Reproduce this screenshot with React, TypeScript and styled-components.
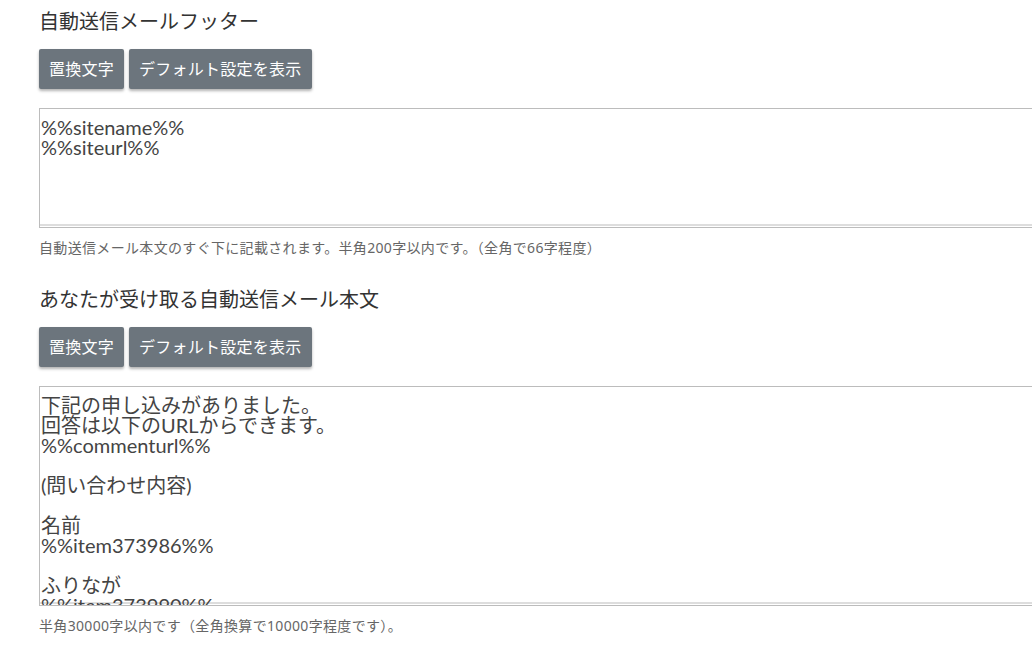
import React from "react";
import styled, { createGlobalStyle } from "styled-components";

const GlobalStyle = createGlobalStyle`
  html, body {
    margin: 0;
    padding: 0;
    background: #ffffff;
    overflow: hidden;
  }
  body {
    font-family: "Noto Sans", "Noto Sans CJK JP", sans-serif;
    color: #333333;
  }
`;

const Page = styled.div`
  padding: 10px 0 0 39px;
  display: flex;
  flex-direction: column;
`;

const Section = styled.section`
  display: flex;
  flex-direction: column;
  margin-bottom: 31px;
`;

const Title = styled.h3`
  margin: 0;
  font-size: 20px;
  font-weight: 400;
  line-height: 24px;
  color: #333333;
`;

const Toolbar = styled.div`
  display: flex;
  gap: 5px;
  margin-top: 15px;
`;

const Button = styled.button`
  height: 40px;
  padding: 0 10px;
  border: none;
  border-radius: 2px;
  background: #6c757d;
  color: #ffffff;
  font-family: "Noto Sans", "Noto Sans CJK JP", sans-serif;
  font-size: 16px;
  line-height: 40px;
  letter-spacing: 0.25px;
  box-shadow: 0 2px 3px rgba(0, 0, 0, 0.3);
  cursor: pointer;
`;

const Editor = styled.textarea<{ $height: number }>`
  display: block;
  margin-top: 19px;
  width: 1100px;
  height: ${(p) => p.$height}px;
  box-sizing: border-box;
  padding: 8px 1px 0 1px;
  border: 1px solid #bcbcbc;
  box-shadow: inset 0 -1px 0 #ffffff, inset 0 -3px 0 #dddddd;
  font-family: "Lato", "Noto Sans CJK JP", sans-serif;
  font-size: 20px;
  line-height: 20px;
  color: #444444;
  resize: none;
  overflow: hidden;
  outline: none;
  background: #ffffff;
`;

const Help = styled.p`
  margin: 11px 0 0;
  font-size: 14px;
  line-height: 18px;
  letter-spacing: 0.33px;
  color: #666666;
`;

const footerText = "%%sitename%%\n%%siteurl%%";
const bodyText =
  "下記の申し込みがありました。\n回答は以下のURLからできます。\n%%commenturl%%\n\n(問い合わせ内容)\n\n名前\n%%item373986%%\n\nふりなが\n%%item373990%%\n\nメールアドレス\n%%item373987%%";

export default function App() {
  return (
    <>
      <GlobalStyle />
      <Page>
        <Section>
          <Title>自動送信メールフッター</Title>
          <Toolbar>
            <Button>置換文字</Button>
            <Button>デフォルト設定を表示</Button>
          </Toolbar>
          <Editor $height={120} readOnly defaultValue={footerText} />
          <Help>自動送信メール本文のすぐ下に記載されます。半角200字以内です。（全角で66字程度）</Help>
        </Section>
        <Section>
          <Title>あなたが受け取る自動送信メール本文</Title>
          <Toolbar>
            <Button>置換文字</Button>
            <Button>デフォルト設定を表示</Button>
          </Toolbar>
          <Editor $height={220} readOnly defaultValue={bodyText} />
          <Help>半角30000字以内です（全角換算で10000字程度です）。</Help>
        </Section>
      </Page>
    </>
  );
}
